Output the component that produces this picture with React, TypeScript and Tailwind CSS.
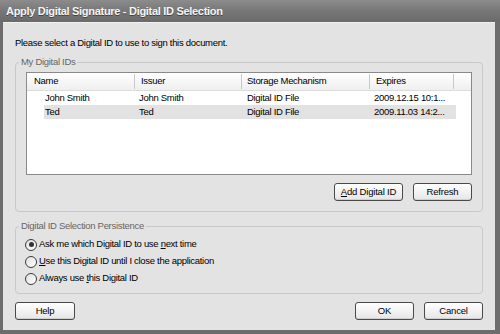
import type { ReactNode } from "react";

// Apply Digital Signature dialog, XP-style grey theme.

const rows = [
  { name: "John Smith", issuer: "John Smith", storage: "Digital ID File", expires: "2009.12.15 10:1...", selected: false },
  { name: "Ted", issuer: "Ted", storage: "Digital ID File", expires: "2009.11.03 14:2...", selected: true },
];

function Button({ children, className = "" }: { children: ReactNode; className?: string }) {
  return (
    <button
      className={`flex h-[18px] items-center justify-center rounded-[3px] border border-[#4a4a4a] bg-gradient-to-b from-white to-[#e6e6e6] text-[9.5px] tracking-[-0.2px] text-black shadow-[inset_0_-1px_0_#cfcfcf] ${className}`}
    >
      {children}
    </button>
  );
}

function Radio({ checked, children }: { checked?: boolean; children: ReactNode }) {
  return (
    <div className="flex h-[17px] items-center gap-[2px]">
      <span className="flex h-[12px] w-[12px] items-center justify-center rounded-full border border-[#3c3c3c] bg-gradient-to-br from-[#e0e0e0] to-white">
        {checked && <span className="h-[5px] w-[5px] rounded-full bg-[#333]" />}
      </span>
      <span>{children}</span>
    </div>
  );
}

// fieldset keeps the legend sitting on the border line; padding lives on the inner div
function Group({ title, className = "", children }: { title: string; className?: string; children: ReactNode }) {
  return (
    <fieldset className={`rounded-[4px] border border-[#c8c8c8] ${className}`}>
      <legend className="ml-[3px] px-[2px] leading-[10px] text-[#666]">{title}</legend>
      {children}
    </fieldset>
  );
}

export default function App() {
  return (
    <div className="flex h-[334px] w-[500px] flex-col bg-[#6d6d6d] font-['Liberation_Sans',Arial,sans-serif] text-[9.5px] tracking-[-0.3px] text-black">
      {/* title bar */}
      <div className="flex h-[22px] shrink-0 items-center bg-gradient-to-b from-[#8c8c8c] via-[#777] to-[#6a6a6a] pl-[6px] pr-[8px]">
        <span className="text-[11px] font-bold tracking-[-0.3px] text-[#f4f4f4] [text-shadow:0_1px_0_#444]">
          Apply Digital Signature - Digital ID Selection
        </span>
      </div>

      <div className="mb-[4px] ml-[3px] mr-[5px] flex flex-1 flex-col border-t border-[#f2f2f2] bg-[#e3e3e3] px-[12px] pt-[14px]">
        <p className="leading-[12px]">Please select a Digital ID to use to sign this document.</p>

        <Group title="My Digital IDs" className="mt-[8px] h-[155px]">
          <div className="px-[10px] pb-[8px]">
            <div className="mt-[5px] flex h-[103px] flex-col border border-[#8a8a8a] bg-white">
              <div className="flex h-[18px] shrink-0 items-center border-b border-[#dcdcdc] bg-gradient-to-b from-white to-[#efefef]">
                <div className="w-[108px] border-r border-[#c8c8c8] pl-[7px]">Name</div>
                <div className="w-[107px] border-r border-[#c8c8c8] pl-[6px]">Issuer</div>
                <div className="w-[128px] border-r border-[#c8c8c8] pl-[5px]">Storage Mechanism</div>
                <div className="w-[84px] border-r border-[#c8c8c8] pl-[6px]">Expires</div>
              </div>
              {rows.map((r) => (
                <div key={r.name} className="flex h-[14px] items-center pl-[17px]">
                  <div className={`flex h-full w-[412px] items-center ${r.selected ? "bg-[#e2e2e2]" : ""}`}>
                    <div className="w-[95px] pl-[1px]">{r.name}</div>
                    <div className="w-[108px]">{r.issuer}</div>
                    <div className="w-[127px]">{r.storage}</div>
                    <div className="w-[82px] whitespace-nowrap">{r.expires}</div>
                  </div>
                </div>
              ))}
            </div>
            <div className="mt-[8px] flex justify-end gap-[10px]">
              <Button className="w-[69px]">
                <span className="underline">A</span>dd Digital ID
              </Button>
              <Button className="w-[59px]">Refresh</Button>
            </div>
          </div>
        </Group>

        <Group title="Digital ID Selection Persistence" className="mt-[9px] h-[73px]">
          <div className="px-[9px] pt-[5px]">
            <Radio checked>
              Ask me which Digital ID to use <span className="underline">n</span>ext time
            </Radio>
            <Radio>
              <span className="underline">U</span>se this Digital ID until I close the application
            </Radio>
            <Radio>
              Always use <span className="underline">t</span>his Digital ID
            </Radio>
          </div>
        </Group>

        <div className="mt-[8px] flex items-center">
          <Button className="w-[60px]">Help</Button>
          <div className="ml-auto flex gap-[10px]">
            <Button className="w-[59px]">OK</Button>
            <Button className="w-[59px]">Cancel</Button>
          </div>
        </div>
      </div>
    </div>
  );
}
